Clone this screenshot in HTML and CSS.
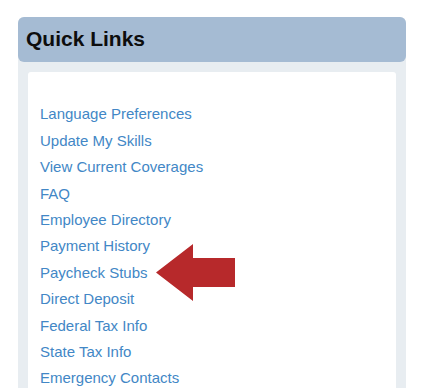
FILE: index.html
```html
<!DOCTYPE html>
<html>
<head>
<meta charset="utf-8">
<link rel="stylesheet" href="styles.css">
</head>
<body>
<div class="page">
  <div class="panel">
    <div class="panel-header">Quick Links</div>
    <div class="panel-body">
      <ul class="links">
        <li><a href="#">Language Preferences</a></li>
        <li><a href="#">Update My Skills</a></li>
        <li><a href="#">View Current Coverages</a></li>
        <li><a href="#">FAQ</a></li>
        <li><a href="#">Employee Directory</a></li>
        <li><a href="#">Payment History</a></li>
        <li><a href="#">Paycheck Stubs</a></li>
        <li><a href="#">Direct Deposit</a></li>
        <li><a href="#">Federal Tax Info</a></li>
        <li><a href="#">State Tax Info</a></li>
        <li><a href="#">Emergency Contacts</a></li>
      </ul>
      <svg class="arrow" width="79" height="57" viewBox="0 0 79 57">
        <polygon points="0,28.5 37,0 37,14 79,14 79,43 37,43 37,57" fill="#b7292b"/>
      </svg>
    </div>
  </div>
</div>
</body>
</html>
```

FILE: styles.css
```css
html, body {
  margin: 0;
  padding: 0;
  background: #ffffff;
  overflow: hidden;
}
.page {
  padding: 17px 15px 0 18px;
  font-family: "Liberation Sans", Arial, sans-serif;
}
.panel {
  width: 388px;
  background: #e8edf1;
  border-radius: 6px 6px 0 0;
}
.panel-header {
  height: 45px;
  line-height: 43px;
  padding-left: 8px;
  background: #a5bbd3;
  border-radius: 6px;
  font-size: 21px;
  font-weight: bold;
  color: #0d0d0d;
  box-sizing: border-box;
}
.panel-body {
  position: relative;
  margin: 10px 10px 0 10px;
  background: #ffffff;
  border-radius: 3px 3px 0 0;
  padding: 29.4px 12px 0 12px;
  height: 316px;
  overflow: hidden;
  box-sizing: border-box;
}
.links {
  list-style: none;
  margin: 0;
  padding: 0;
}
.links li {
  height: 26.4px;
  line-height: 26.4px;
  font-size: 15px;
}
.links a {
  color: #4287c6;
  text-decoration: none;
}
.arrow {
  position: absolute;
  left: 128px;
  top: 172px;
}
```
